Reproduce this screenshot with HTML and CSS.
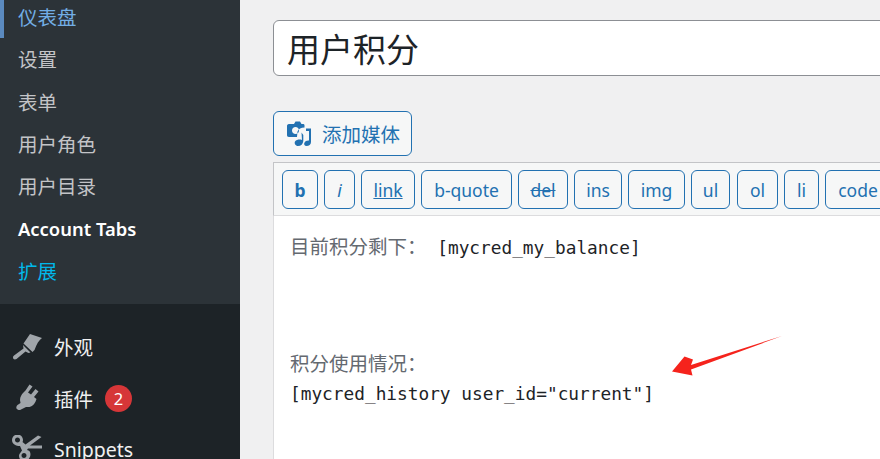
FILE: index.html
```html
<!DOCTYPE html>
<html lang="zh-CN">
<head>
  <meta charset="UTF-8">
  <title>用户积分</title>
  <link rel="stylesheet" href="styles.css">
</head>
<body>
  <aside class="sidebar">
    <ul class="submenu">
      <li class="current">仪表盘</li>
      <li>设置</li>
      <li>表单</li>
      <li>用户角色</li>
      <li>用户目录</li>
      <li class="strong">Account Tabs</li>
      <li class="accent">扩展</li>
    </ul>
    <ul class="menu">
      <li>
        <svg class="menu-icon" viewBox="0 0 30 30"><path d="M18 2 L30 6 C27 8 24.500 12 22.500 18 L20.500 20 L11.500 11.500 Z"/><path d="M11 13 L18.500 20.500 L16.500 21 L13.500 19.500 L4.500 27 C3 28 1 27.500 1 25.500 C1 24.500 1.500 24 2 23.500 L11.500 16.500 Z"/></svg>
        <span>外观</span>
      </li>
      <li>
        <svg class="menu-icon" viewBox="0 0 30 30"><path d="M17.500 1.500 L20.500 3.500 L16 9.500 L19 11.500 L23.500 6 L26.500 8.500 L22 14 L24.500 16 C23.500 20 21 23 17.500 24 L14 24 L9 26.500 C7.500 27.500 5.500 27 4.500 25.500 C4 24.500 4.500 23 5.500 22 L8.500 20 L8 17 C8 14 9.500 11.500 11.500 9.500 L13.500 7.500 Z"/></svg>
        <span>插件</span>
        <b class="badge">2</b>
      </li>
      <li>
        <svg class="menu-icon" viewBox="0 0 30 30"><path fill-rule="evenodd" d="M5.500 -0.500 C8.500 -0.500 11 2 11 5 C11 6 10.800 6.500 10.500 7 L13.500 9.500 L26 0.500 L29.500 2 L18 10.500 L30 10.500 L30 13.500 L16 13.500 L15 15 L16.500 15.500 C20 17 19 26 12 26 C8 26 6 22 7.500 19 L10 15.500 L8 11 C4 11 0 9 0 5 C0 2 2.500 -0.500 5.500 -0.500 Z M5.500 2.500 C4 2.500 3 3.500 3 5 C3 6.500 4 7.500 5.500 7.500 C7 7.500 8 6.500 8 5 C8 3.500 7 2.500 5.500 2.500 Z M12 18 C10.500 18 9.500 19 9.500 20.500 C9.500 22 10.500 23 12 23 C13.500 23 14.500 22 14.500 20.500 C14.500 19 13.500 18 12 18 Z"/></svg>
        <span>Snippets</span>
      </li>
    </ul>
  </aside>

  <main class="content">
    <div class="title-box">用户积分</div>

    <button class="media-btn">
      <svg class="media-icon" viewBox="0 0 26 26"><path fill-rule="evenodd" d="M3 3 L8 3 L9.500 0.500 L14 0.500 L15.500 3 L17 3 C18 3 18.500 3.500 18.500 4.500 L18.500 6.500 C15 6.500 12.500 8 11.500 10.500 L11 16 L3 16 C1.500 16 1 15 1 14 L1 5 C1 4 1.500 3 3 3 Z M9.500 6 C7.500 6 6 7.500 6 9.500 C6 11.500 7.500 13 9.500 13 C11.500 13 13 11.500 13 9.500 C13 7.500 11.500 6 9.500 6 Z"/><path d="M15.500 11.500 L16 19 C14 18 10.500 18.500 9 20.500 C8 22.500 9.500 25 12 25 C15 25 17 23 17.300 20 L17.300 14 L15.500 11.500 Z"/><path d="M20 7.500 L25 7.500 L25 21 C25 23.500 23 25 20.500 25 C18.500 25 17.800 23.500 18.300 22 C19 20 21 19.300 23 19.500 L23 10 L20 10 Z"/></svg>
      添加媒体
    </button>

    <div class="toolbar">
      <button class="tag w-b"><b>b</b></button>
      <button class="tag w-i"><i>i</i></button>
      <button class="tag w-link"><u>link</u></button>
      <button class="tag w-quote">b-quote</button>
      <button class="tag w-del"><s>del</s></button>
      <button class="tag w-ins">ins</button>
      <button class="tag w-img">img</button>
      <button class="tag w-ul">ul</button>
      <button class="tag w-ol">ol</button>
      <button class="tag w-li">li</button>
      <button class="tag w-code">code</button>
    </div>

    <div class="editor"><span class="cjk">目前积分剩下：</span> [mycred_my_balance]



<span class="cjk">积分使用情况：</span>
[mycred_history user_id="current"]</div>

    <svg class="arrow" viewBox="0 0 112 42"><path d="M111 0 L20 29 L22 23.500 L13.500 20.500 L1 35.500 L21.500 39.500 L20 33.500 Z"/></svg>
  </main>
</body>
</html>
```

FILE: styles.css
```css
html, body {
  height: 100%;
}

body {
  margin: 0;
  display: flex;
  overflow: hidden;
  background: #f0f0f1;
  font-family: "Noto Sans", "Noto Sans CJK SC", sans-serif;
  font-size: 19.5px;
  color: #2c3338;
}

ul {
  list-style: none;
  margin: 0;
  padding: 0;
}

button {
  font: inherit;
  color: #2271b1;
  background: #f6f7f7;
  border: 1.5px solid #2271b1;
  border-radius: 6px;
  box-sizing: border-box;
  padding: 0;
  display: flex;
  align-items: center;
  justify-content: center;
  flex-shrink: 0;
}

.sidebar {
  width: 240px;
  flex-shrink: 0;
  background: #1d2327;
}

.submenu {
  background: #2c3338;
  margin-top: -4px;
  padding-bottom: 12px;
  color: #c3c4c7;
}

.submenu li {
  height: 42.3px;
  line-height: 44px;
  padding-left: 18px;
}

.submenu .current {
  color: #72aee6;
  padding-left: 14px;
  border-left: 4px solid #5b8abf;
}

.submenu .strong {
  color: #fff;
  font-size: 18.4px;
  font-weight: 600;
}

.submenu .accent {
  color: #00b9eb;
}

.menu {
  padding-top: 17px;
  color: #f0f0f1;
}

.menu li {
  height: 51.5px;
  display: flex;
  align-items: center;
  padding-left: 12px;
}

.menu-icon {
  width: 30px;
  height: 30px;
  margin-right: 12px;
  fill: #a0a5aa;
}

.badge {
  width: 27px;
  height: 27px;
  margin-left: 12px;
  border-radius: 50%;
  background: #d63638;
  color: #fff;
  font-size: 16.5px;
  font-weight: 400;
  line-height: 27px;
  text-align: center;
}

.content {
  position: relative;
  flex: 1;
  min-width: 0;
  padding: 20px 0 0 33px;
}

.title-box {
  width: 700px;
  height: 56px;
  box-sizing: border-box;
  padding-left: 13px;
  border: 1.5px solid #8c8f94;
  border-radius: 6px;
  background: #fff;
  color: #1d2327;
  font-size: 33px;
  line-height: 58px;
}

.media-btn {
  width: 139px;
  height: 45px;
  margin-top: 35px;
  gap: 10px;
  padding-left: 1px;
}

.media-icon {
  width: 26px;
  height: 26px;
  fill: #2271b1;
}

.toolbar {
  display: flex;
  gap: 6px;
  width: 700px;
  height: 54px;
  box-sizing: border-box;
  margin-top: 6px;
  padding: 7px 0 0 8px;
  background: #f6f7f7;
  border: 1.5px solid #c3c4c7;
  border-bottom-color: #dcdcde;
  border-right: 0;
}

.tag {
  height: 39px;
  font-size: 17.5px;
}

.w-b { width: 36px; }
.w-i { width: 31px; }
.w-link { width: 54px; }
.w-quote { width: 91px; }
.w-del { width: 50px; }
.w-ins { width: 48px; }
.w-img { width: 57px; }
.w-ul { width: 39px; }
.w-ol { width: 41px; margin-left: 1px; }
.w-li { width: 35px; }
.w-code { width: 66px; }

.editor {
  height: 243px;
  width: 700px;
  box-sizing: border-box;
  padding: 17px 0 0 16px;
  background: #fff;
  border-left: 1.5px solid #dcdcde;
  color: #1d2327;
  font-family: "DejaVu Sans Mono", "Noto Sans CJK SC", monospace;
  font-size: 17.8px;
  line-height: 29.25px;
  white-space: pre-wrap;
}

.cjk {
  font-family: "Noto Sans CJK SC", sans-serif;
  font-size: 19.5px;
  line-height: 1;
  color: #646970;
}

.arrow {
  position: absolute;
  left: 431px;
  top: 336px;
  width: 112px;
  height: 42px;
  fill: #f5231c;
}
```
